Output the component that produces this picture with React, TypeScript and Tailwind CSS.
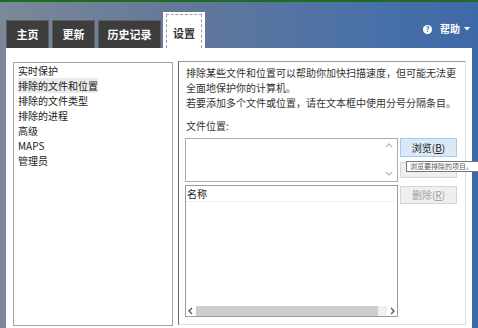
import React from "react";

const Chevron = ({ dir, color = "#bdbdbd" }: { dir: "up" | "down" | "left" | "right"; color?: string }) => {
  const paths: Record<string, string> = {
    up: "M1 5 L4 2 L7 5",
    down: "M1 2 L4 5 L7 2",
    left: "M5 1 L2 4 L5 7",
    right: "M3 1 L6 4 L3 7",
  };
  return (
    <svg width="8" height="8" viewBox="0 0 8 8">
      <path d={paths[dir]} fill="none" stroke={color} strokeWidth="1.3" />
    </svg>
  );
};

export default function App() {
  const items = ["实时保护", "排除的文件和位置", "排除的文件类型", "排除的进程", "高级", "MAPS", "管理员"];
  return (
    <div className="w-[478px] h-[328px] overflow-hidden flex flex-col bg-[linear-gradient(to_right,#7b8898,#62779a_40%,#4a71a8_75%,#3e69a8)] font-['Noto_Sans_CJK_SC',sans-serif]">
      <div className="h-[2px] bg-[#1f6b22] shrink-0" />
      <div className="h-[46px] shrink-0 flex items-end pl-[6px] pr-[8px]">
        <div className="w-[43px] h-[28px] mr-[3px] bg-[#3d3d3d] border border-b-0 border-[#5e5e5e] flex items-center justify-center text-white text-[11px] font-bold leading-none">主页</div>
        <div className="w-[43px] h-[28px] mr-[3px] bg-[#3d3d3d] border border-b-0 border-[#5e5e5e] flex items-center justify-center text-white text-[11px] font-bold leading-none">更新</div>
        <div className="w-[63px] h-[28px] mr-[2px] bg-[#3d3d3d] border border-b-0 border-[#5e5e5e] flex items-center justify-center text-white text-[11px] font-bold leading-none">历史记录</div>
        <div className="w-[42px] h-[36px] bg-white px-[3px] pt-[2px] flex">
          <div className="flex-1 border border-dashed border-b-0 border-[#9a9a9a] flex items-center justify-center text-[#333] text-[11px] font-bold leading-none pt-[4px]">设置</div>
        </div>
        <div className="ml-auto self-start mt-[21px] flex items-center h-[12px]">
          <div className="w-[9px] h-[9px] rounded-full bg-white flex items-center justify-center text-[#3b4f6e] text-[7px] font-bold leading-none">?</div>
          <span className="ml-[8px] text-white text-[10px] font-bold leading-none">帮助</span>
          <svg className="ml-[4px]" width="6" height="4" viewBox="0 0 6 4"><path d="M0 0 L6 0 L3 3.5 Z" fill="#ffffff" /></svg>
        </div>
      </div>
      <div className="flex-1 ml-[6px] w-[466px] bg-white flex items-start pt-[13px] pl-[7px]">
        <div className="w-[160px] h-[264px] mt-[1px] border border-[#a5a5a5] pl-[4px] flex flex-col items-start">
          {items.map((t, i) => (
            <span key={t} className={`text-[10px] leading-[15px] text-[#222] ${i === 1 ? "bg-[#ebebeb]" : ""}`}>{t}</span>
          ))}
        </div>
        <div className="ml-[5px] w-[288px] h-[264px] border-l border-l-[#6a6a6a] border-t border-t-[#9a9a9a] border-r border-r-[#dedede] border-b border-b-[#dedede] pl-[6px] pt-[3px] flex flex-col">
          <div className="pl-[1px] text-[10px] leading-[15px] text-[#333] whitespace-nowrap">
            <div>排除某些文件和位置可以帮助你加快扫描速度，但可能无法更</div>
            <div>全面地保护你的计算机。</div>
            <div>若要添加多个文件或位置，请在文本框中使用分号分隔条目。</div>
            <div className="mt-[8px]">文件位置:</div>
          </div>
          <div className="mt-[5px] flex gap-[2px]">
            <div className="w-[213px] h-[44px] border border-[#acacac] bg-white flex justify-end">
              <div className="w-[10px] flex flex-col items-center justify-between py-[3px] mr-[3px]">
                <Chevron dir="up" />
                <Chevron dir="down" />
              </div>
            </div>
            <div className="w-[57px] relative">
              <div className="h-[19px] bg-[#dae8f7] border border-[#a8c8ec] flex items-center justify-center text-[10px] leading-none text-[#222]">
                浏览(<span className="underline">B</span>)
              </div>
              <div className="mt-[5px] h-[16px] bg-[#efefef] border border-[#d8d8d8]" />
              <div className="absolute left-[6px] top-[23px] w-[76px] h-[11px] bg-white border border-[#767676] pl-[3px] text-[7px] leading-[9px] text-[#555] whitespace-nowrap">浏览要排除的项目。</div>
            </div>
          </div>
          <div className="mt-[3px] flex gap-[2px]">
            <div className="w-[213px] h-[132px] border border-[#9c9c9c] bg-white flex flex-col">
              <div className="h-[16px] border-b border-[#f0f0f0] pl-[1px] text-[10px] leading-[15px] text-[#222]">名称</div>
              <div className="flex-1" />
              <div className="h-[10px] flex items-stretch">
                <div className="w-[10px] flex items-center justify-center"><Chevron dir="left" color="#555" /></div>
                <div className="w-[182px] bg-[#cdcdcd]" />
                <div className="flex-1 bg-[#f0f0f0]" />
                <div className="w-[10px] flex items-center justify-center"><Chevron dir="right" color="#555" /></div>
              </div>
            </div>
            <div className="w-[57px]">
              <div className="mt-[1px] h-[18px] bg-[#efefef] border border-[#d5d5d5] flex items-center justify-center text-[10px] leading-none text-[#a0a0a0]">
                删除(<span className="underline">R</span>)
              </div>
            </div>
          </div>
        </div>
      </div>
    </div>
  );
}
